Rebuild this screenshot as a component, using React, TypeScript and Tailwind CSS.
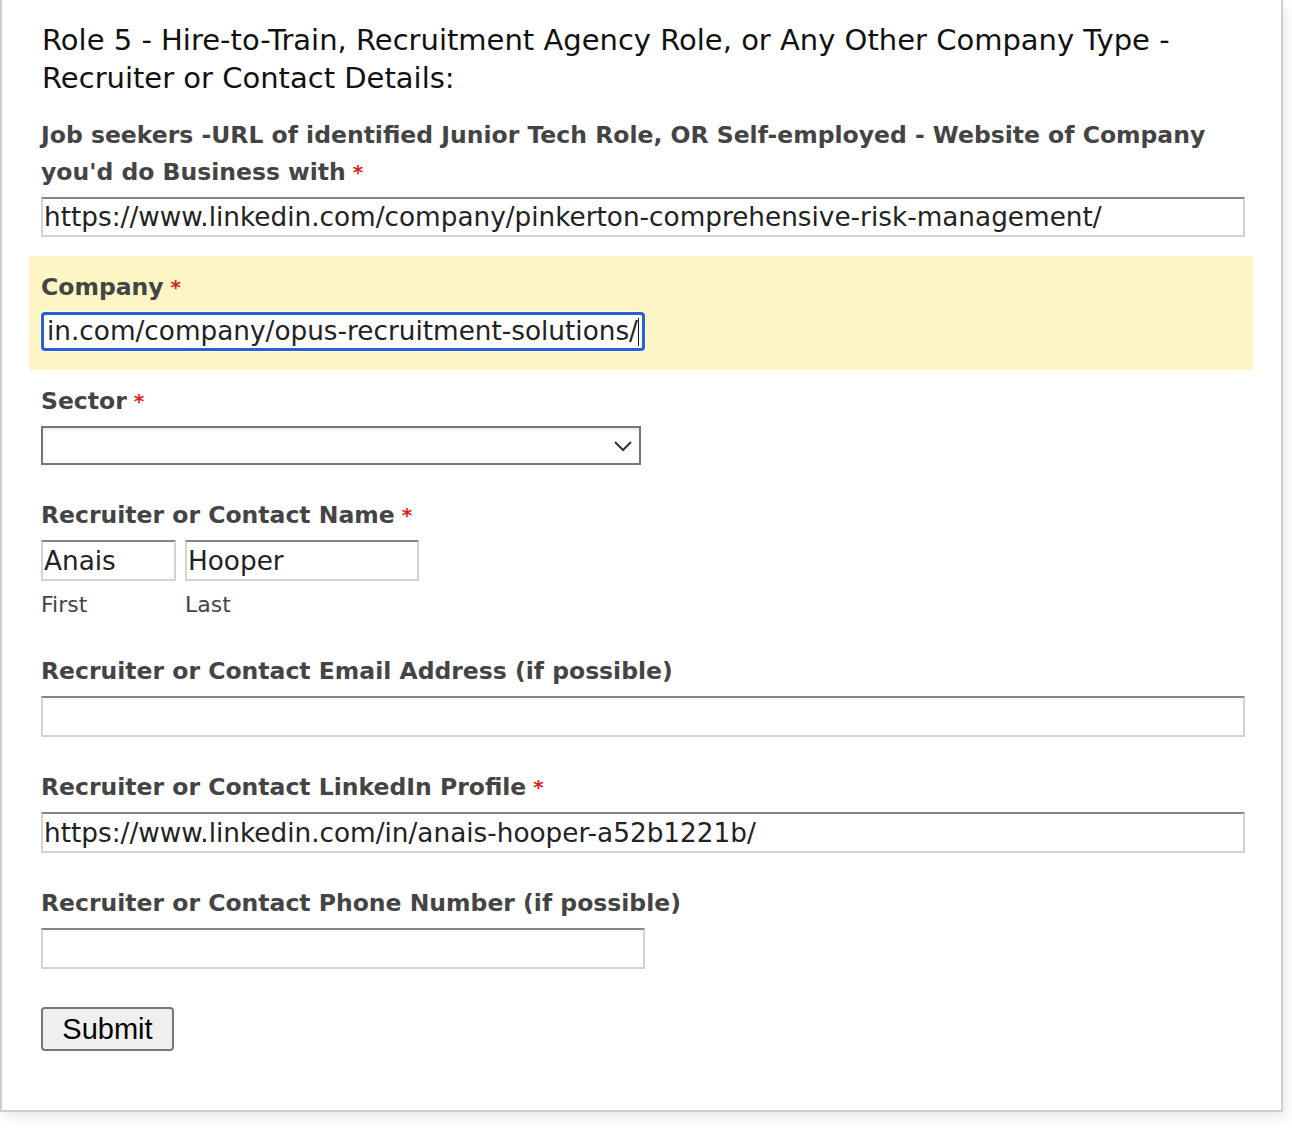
import React from 'react';

const font = { fontFamily: '"DejaVu Sans", Verdana, sans-serif' };

function Req() {
  return <span className="text-[#e02020] ml-[7px] text-[20px] align-top">*</span>;
}

function Label({ children, required }: { children: React.ReactNode; required?: boolean }) {
  return (
    <label className="block text-[23.5px] leading-[37px] font-bold text-[#444]">
      {children}
      {required && <Req />}
    </label>
  );
}

function TextBox({ value, className }: { value?: string; className: string }) {
  return (
    <input
      readOnly
      value={value ?? ''}
      className={`block h-[40px] border-2 border-[#d3d3d3] border-t-[#858585] bg-white px-[1px] text-[26.3px] text-[#222] outline-none ${className}`}
      style={font}
    />
  );
}

function Field({ children, highlight }: { children: React.ReactNode; highlight?: boolean }) {
  return (
    <li className={`pl-[12px] pr-[8px] pt-[13px] pb-[19px] ${highlight ? 'bg-[#fdf6c4]' : ''}`}>{children}</li>
  );
}

export default function App() {
  return (
    <div className="min-h-[1132px] bg-white" style={font}>
      <div className="w-[1283px] border-2 border-t-0 border-[#cfcfcf] bg-white pl-[27px] pr-[28px] pt-[21px] pb-[59px] shadow-[4px_6px_10px_rgba(0,0,0,0.08)]">
        <h2 className="pl-[13px] text-[29px] leading-[38px] font-normal text-[#111]">
          Role 5 - Hire-to-Train, Recruitment Agency Role, or Any Other Company Type -<br />
          Recruiter or Contact Details:
        </h2>

        <ul className="mt-[7px]">
          <Field>
            <Label required>
              Job seekers -URL of identified Junior Tech Role, OR Self-employed - Website of Company
              <br />
              you'd do Business with
            </Label>
            <div className="mt-[6px]">
              <TextBox
                className="w-full"
                value="https://www.linkedin.com/company/pinkerton-comprehensive-risk-management/"
              />
            </div>
          </Field>

          <Field highlight>
            <Label required>Company</Label>
            <div className="mt-[6px] w-[604px] h-[39px] rounded-[4px] border-[3px] border-[#2b5fcb] bg-white ring-1 ring-white flex items-center overflow-hidden whitespace-nowrap pl-[3px] text-[26.3px] text-[#222]">
              <span>in.com/company/opus-recruitment-solutions/</span>
              <span className="inline-block w-[1.5px] h-[28px] bg-[#111]" />
            </div>
          </Field>

          <Field>
            <Label required>Sector</Label>
            <div className="mt-[6px] w-[600px] h-[39px] border-2 border-[#767676] bg-white flex items-center justify-end pr-[6px] shadow-[inset_0_2px_2px_rgba(0,0,0,0.08)]">
              <svg width="20" height="12" viewBox="0 0 20 12" fill="none">
                <path d="M2 2 L10 10 L18 2" stroke="#333" strokeWidth="2" />
              </svg>
            </div>
          </Field>

          <Field>
            <Label required>Recruiter or Contact Name</Label>
            <div className="mt-[6px] flex gap-[9px]">
              <div>
                <TextBox className="w-[135px] h-[41px]" value="Anais" />
                <div className="text-[22px] leading-[24px] text-[#444] mt-[12px] mb-[4px]">First</div>
              </div>
              <div>
                <TextBox className="w-[234px] h-[41px]" value="Hooper" />
                <div className="text-[22px] leading-[24px] text-[#444] mt-[12px] mb-[4px]">Last</div>
              </div>
            </div>
          </Field>

          <Field>
            <Label>Recruiter or Contact Email Address (if possible)</Label>
            <div className="mt-[6px]">
              <TextBox className="w-full h-[41px]" />
            </div>
          </Field>

          <Field>
            <Label required>Recruiter or Contact LinkedIn Profile</Label>
            <div className="mt-[6px]">
              <TextBox className="w-full h-[41px]" value="https://www.linkedin.com/in/anais-hooper-a52b1221b/" />
            </div>
          </Field>

          <Field>
            <Label>Recruiter or Contact Phone Number (if possible)</Label>
            <div className="mt-[6px]">
              <TextBox className="w-[604px] h-[41px]" />
            </div>
          </Field>
        </ul>

        <div className="pl-[12px] mt-[19px]">
          <button
            className="block w-[133px] h-[44px] rounded-[4px] border-2 border-[#767676] bg-[#efefef] text-[29px] text-black leading-none"
            style={{ fontFamily: '"Liberation Sans", Arial, sans-serif' }}
          >
            Submit
          </button>
        </div>
      </div>
    </div>
  );
}
